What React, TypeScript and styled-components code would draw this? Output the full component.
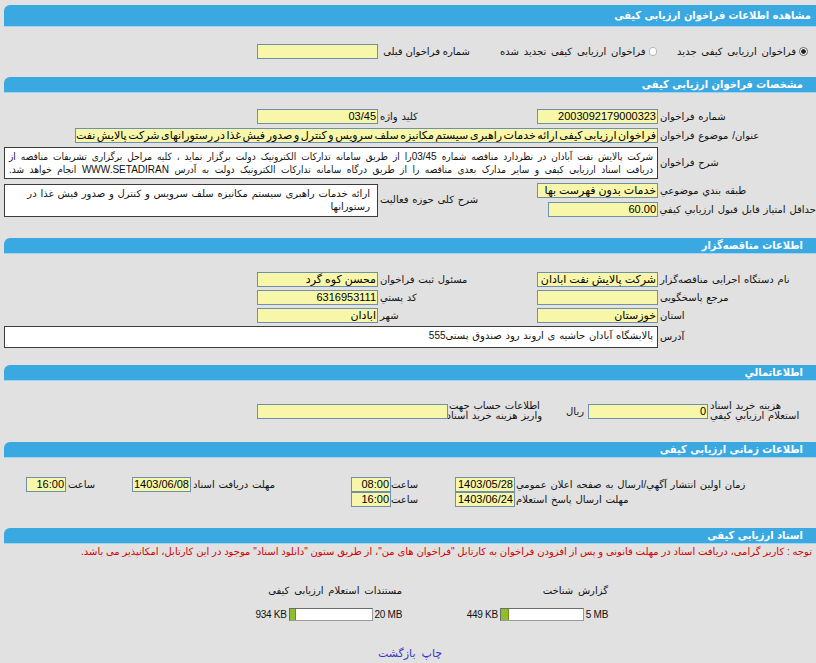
import React from "react";
import styled, { createGlobalStyle } from "styled-components";

const GlobalStyle = createGlobalStyle`
  html, body { margin: 0; padding: 0; background: #e1e1e1; }
  body {
    font-family: "Liberation Sans", "DejaVu Sans", sans-serif;
    font-size: 10px;
    color: #111;
  }
`;

const Page = styled.div`
  direction: rtl;
  width: 812px;
  padding: 5px 0 0 4px;
`;

const Bar = styled.div<{ $main?: boolean }>`
  box-sizing: border-box;
  height: ${(p) => (p.$main ? 22 : 16)}px;
  line-height: ${(p) => (p.$main ? 21 : 15)}px;
  background: #3aa8e1;
  border-bottom: 1px solid #9fd4f3;
  border-top-left-radius: 6px;
  color: #fff;
  font-family: "DejaVu Sans Condensed", "DejaVu Sans", sans-serif;
  font-weight: bold;
  font-size: 11px;
  padding-right: ${(p) => (p.$main ? 5 : 13)}px;
  white-space: nowrap;
  overflow: hidden;
`;

const Body = styled.div<{ $top: number; $bottom: number }>`
  padding-top: ${(p) => p.$top}px;
  padding-bottom: ${(p) => p.$bottom}px;
`;

const Grid = styled.div<{ $cols: string; $gap?: number }>`
  display: grid;
  grid-template-columns: ${(p) => p.$cols};
  row-gap: ${(p) => p.$gap ?? 4}px;
  align-items: center;
`;

const Label = styled.div<{ $align?: "left" | "right"; $pad?: number }>`
  text-align: ${(p) => p.$align ?? "left"};
  padding-left: ${(p) => (p.$align === "right" ? 0 : p.$pad ?? 2)}px;
  padding-right: ${(p) => (p.$align === "right" ? p.$pad ?? 0 : 0)}px;
  white-space: nowrap;
  word-spacing: 1px;
  line-height: 12px;
`;

const PrevLabel = styled(Label)`
  word-spacing: 0;
`;

const TwoLineLabel = styled(Label)`
  line-height: 10px;
`;

const Field = styled.div<{ $w: number }>`
  box-sizing: border-box;
  width: ${(p) => p.$w}px;
  height: 15px;
  line-height: 13px;
  background: #f8f6a8;
  border: 1px solid #6f8fae;
  padding: 0 1px;
  font-size: 11px;
  color: #000;
  overflow: hidden;
  white-space: nowrap;
  text-align: right;
`;

const WideField = styled(Field)`
  grid-column: 2 / -1;
  word-spacing: -1.5px;
`;

const TextBox = styled.div<{ $h: number }>`
  box-sizing: border-box;
  height: ${(p) => p.$h}px;
  background: #fff;
  border: 1px solid #3c3c3c;
  padding: 2px 4px 0 4px;
  line-height: 13px;
  overflow: hidden;
  grid-column: 2 / -1;
`;

const SpanBox = styled(TextBox)`
  grid-column: 4 / -1;
  grid-row: span 2;
  padding-right: 7px;
`;

const SpanLabel = styled(Label)`
  grid-row: span 2;
`;

const Line = styled.div<{ $justify?: boolean }>`
  white-space: nowrap;
  text-align: ${(p) => (p.$justify ? "justify" : "right")};
  text-align-last: ${(p) => (p.$justify ? "justify" : "right")};
  word-spacing: 1px;
`;

const DescLine = styled(Line)`
  font-family: "Liberation Sans", "DejaVu Sans Condensed", "DejaVu Sans", sans-serif;
  word-spacing: 0;
`;

const ChoiceRow = styled.div`
  display: grid;
  grid-template-columns: 158px 158px 122px 121px 1fr;
  align-items: center;
  height: 15px;
`;

const Choice = styled.label<{ $pad: number }>`
  display: flex;
  align-items: center;
  gap: 3px;
  padding-right: ${(p) => p.$pad}px;
  white-space: nowrap;
  word-spacing: 2px;
`;

const Radio = styled.span<{ $checked?: boolean }>`
  box-sizing: border-box;
  display: inline-block;
  width: 9px;
  height: 9px;
  border-radius: 50%;
  border: 1px solid ${(p) => (p.$checked ? "#666" : "#b5b5b5")};
  background: ${(p) =>
    p.$checked
      ? "radial-gradient(circle, #222 0 2px, #fff 2.6px)"
      : "#fff"};
`;

const Unit = styled.div`
  text-align: right;
  padding-right: 3px;
`;

const Note = styled.div`
  color: #d40000;
  padding: 1px 4px 0 0;
  line-height: 13px;
  white-space: nowrap;
  word-spacing: 0;
`;

const Docs = styled.div`
  display: grid;
  grid-template-columns: 206px 206px;
  padding: 26px 208px 0 0;
`;

const Doc = styled.div`
  display: flex;
  flex-direction: column;
  gap: 10px;
`;

const DocTitle = styled.div`
  word-spacing: 2px;
  line-height: 13px;
`;

const SizeRow = styled.div`
  display: flex;
  align-items: center;
  gap: 2px;
  height: 14px;
`;

const Size = styled.span`
  direction: ltr;
  unicode-bidi: isolate;
  white-space: nowrap;
  letter-spacing: -0.3px;
`;

const Progress = styled.div`
  box-sizing: border-box;
  direction: ltr;
  width: 84px;
  height: 13px;
  background: #fff;
  border: 1px solid #6c6c6c;
  border-right-color: #9a9a9a;
  border-bottom-color: #9a9a9a;
  display: flex;
`;

const Fill = styled.div`
  height: 100%;
  background: #8fbd2e;
  border-right: 1px solid #6b8c22;
`;

const Links = styled.div`
  text-align: center;
  padding: 25px 0 0 0;
  line-height: 14px;
  font-size: 11px;
  word-spacing: 3px;
`;

const Link = styled.a`
  color: #3434c8;
  text-decoration: none;
  cursor: pointer;
`;

const docs = [
  { title: "گزارش شناخت", max: "5 MB", used: "449 KB", ratio: 449 / 5120 },
  { title: "مستندات استعلام ارزيابی کيفی", max: "20 MB", used: "934 KB", ratio: 934 / 20480 },
];

const G4 = "158px 122px 158px 121px 1fr";

export default function App() {
  return (
    <>
      <GlobalStyle />
      <Page>
        <Bar $main>مشاهده اطلاعات فراخوان ارزيابی کيفی</Bar>
        <Body $top={17} $bottom={18}>
          <ChoiceRow>
            <Choice $pad={8}>
              <Radio $checked />
              فراخوان ارزيابی کيفی جديد
            </Choice>
            <Choice $pad={1}>
              <Radio />
              فراخوان ارزيابی کيفی تجديد شده
            </Choice>
            <PrevLabel $align="right" $pad={30}>شماره فراخوان قبلی</PrevLabel>
            <Field $w={121} />
          </ChoiceRow>
        </Body>

        <Bar>مشخصات فراخوان ارزيابی کيفی</Bar>
        <Body $top={16} $bottom={21}>
          <Grid $cols={G4}>
            <Label>شماره فراخوان</Label>
            <Field $w={121}>2003092179000323</Field>
            <Label>کليد واژه</Label>
            <Field $w={121}>03/45</Field>
            <div />

            <Label>عنوان/ موضوع فراخوان</Label>
            <WideField $w={583}>
              فراخوان ارزيابی کيفی ارائه خدمات راهبری سيستم مکانيزه سلف سرويس و کنترل و صدور فيش غذا در رستورانهای شرکت پالايش نفت
            </WideField>

            <Label>شرح فراخوان</Label>
            <TextBox $h={32}>
              <DescLine $justify>
                شرکت پالايش نفت آبادان در نظردارد مناقصه شماره 03/45را از طريق سامانه تدارکات الکترونيک دولت برگزار نمايد ، کليه مراحل برگزاری تشريفات مناقصه از
              </DescLine>
              <DescLine $justify>
                دريافت اسناد ارزيابی کيفی و ساير مدارک بعدی مناقصه را از طريق درگاه سامانه تدارکات الکترونيک دولت به آدرس WWW.SETADIRAN انجام خواهد شد.
              </DescLine>
            </TextBox>

            <Label>طبقه بندي موضوعي</Label>
            <Field $w={121}>خدمات بدون فهرست بها</Field>
            <SpanLabel>شرح کلی حوزه فعاليت</SpanLabel>
            <SpanBox $h={33}>
              <Line>ارائه خدمات راهبری سيستم مکانيزه سلف سرويس و کنترل و صدور فيش غذا در</Line>
              <Line>رستورانها</Line>
            </SpanBox>

            <Label>حداقل امتياز قابل قبول ارزيابي کيفي</Label>
            <Field $w={110}>60.00</Field>
          </Grid>
        </Body>

        <Bar>اطلاعات مناقصه‌گزار</Bar>
        <Body $top={18} $bottom={17}>
          <Grid $cols={G4} $gap={3}>
            <Label>نام دستگاه اجرايی مناقصه‌گزار</Label>
            <Field $w={121}>شرکت پالايش نفت ابادان</Field>
            <Label>مسئول ثبت فراخوان</Label>
            <Field $w={121}>محسن کوه گرد</Field>
            <div />

            <Label>مرجع پاسخگويی</Label>
            <Field $w={121} />
            <Label>کد پستي</Label>
            <Field $w={121}>6316953111</Field>
            <div />

            <Label>استان</Label>
            <Field $w={121}>خوزستان</Field>
            <Label>شهر</Label>
            <Field $w={121}>ابادان</Field>
            <div />

            <Label>آدرس</Label>
            <TextBox $h={22}>
              <Line>پالايشگاه آبادان حاشيه ی اروند رود صندوق پستی555</Line>
            </TextBox>
          </Grid>
        </Body>

        <Bar>اطلاعاتمالي</Bar>
        <Body $top={20} $bottom={21}>
          <Grid $cols="108px 121px 45px 94px 192px 1fr">
            <TwoLineLabel>
              هزينه خريد اسناد
              <br />
              استعلام ارزيابي کيفي
            </TwoLineLabel>
            <Field $w={120}>0</Field>
            <Unit>ريال</Unit>
            <TwoLineLabel $pad={1}>
              اطلاعات حساب جهت
              <br />
              واريز هزينه خريد اسناد
            </TwoLineLabel>
            <Field $w={191} />
          </Grid>
        </Body>

        <Bar>اطلاعات زمانی ارزيابی کيفی</Bar>
        <Body $top={19} $bottom={21}>
          <Grid $cols="301px 60px 64px 41px 159px 59px 66px 40px 1fr" $gap={0}>
            <Label $pad={1}>زمان اولين انتشار آگهي/ارسال به صفحه اعلان عمومي</Label>
            <Field $w={60}>1403/05/28</Field>
            <Label $pad={0}>ساعت</Label>
            <Field $w={40}>08:00</Field>
            <Label>مهلت دريافت اسناد</Label>
            <Field $w={59}>1403/06/08</Field>
            <Label>ساعت</Label>
            <Field $w={40}>16:00</Field>
            <div />

            <Label $pad={1}>مهلت ارسال پاسخ استعلام</Label>
            <Field $w={60}>1403/06/24</Field>
            <Label $pad={0}>ساعت</Label>
            <Field $w={40}>16:00</Field>
          </Grid>
        </Body>

        <Bar>اسناد ارزيابی کيفی</Bar>
        <Note>
          توجه : کاربر گرامی، دريافت اسناد در مهلت قانونی و پس از افزودن فراخوان به کارتابل "فراخوان های من"، از طريق ستون "دانلود اسناد" موجود در اين کارتابل، امکانپذير می باشد.
        </Note>
        <Docs>
          {docs.map((d) => (
            <Doc key={d.title}>
              <DocTitle>{d.title}</DocTitle>
              <SizeRow>
                <Size>{d.max}</Size>
                <Progress>
                  <Fill style={{ width: `${Math.max(5, Math.round(d.ratio * 84))}px` }} />
                </Progress>
                <Size>{d.used}</Size>
              </SizeRow>
            </Doc>
          ))}
        </Docs>
        <Links>
          <Link>چاپ</Link> <Link>بازگشت</Link>
        </Links>
      </Page>
    </>
  );
}
